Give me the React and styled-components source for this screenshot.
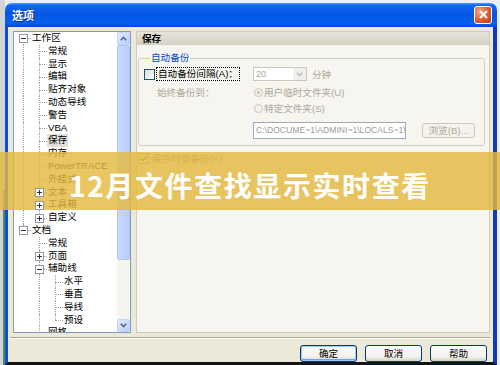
import React from 'react';
import styled, { createGlobalStyle } from 'styled-components';

const UI = `"Liberation Sans", "Noto Sans CJK SC", sans-serif`;

const GlobalStyle = createGlobalStyle`
  html, body { margin: 0; padding: 0; }
  body { width: 500px; height: 365px; overflow: hidden; font-family: ${UI}; }
`;

const Page = styled.div`
  position: relative;
  width: 500px;
  height: 365px;
  display: flex;
  background: #eceef1;
  overflow: hidden;
`;

const BackStrip = styled.div`
  width: 5px;
  flex: none;
  background:
    linear-gradient(to bottom, transparent 0 52%, #4f8a5c 52% 100%) 3px 0 / 2px 100% no-repeat,
    #d3d4d6;
`;

const Dialog = styled.div`
  flex: 1;
  min-width: 0;
  margin: 3px 3px 0 0;
  display: flex;
  flex-direction: column;
`;

const TitleBar = styled.div`
  height: 24px;
  flex: none;
  border-radius: 7px 7px 0 0;
  background: linear-gradient(180deg, #4b9cff 0%, #1065ee 10%, #0556e4 45%, #0660f0 85%, #0546d2 100%);
  display: flex;
  align-items: center;
  justify-content: space-between;
  padding: 0 5px 0 7px;
`;

const Title = styled.span`
  color: #fff;
  font: bold 11px ${UI};
  text-shadow: 1px 1px 0 #0a2a8a;
`;

const CloseButton = styled.div`
  width: 18px;
  height: 18px;
  margin-top: -1px;
  box-sizing: border-box;
  border: 1px solid #fff;
  border-radius: 3px;
  background: radial-gradient(circle at 30% 30%, #f2a58a, #dc5a30 55%, #c03c14);
  display: flex;
  align-items: center;
  justify-content: center;
`;

const Frame = styled.div`
  flex: 1;
  min-height: 0;
  display: flex;
  flex-direction: column;
  background: #ece9d8;
  border-left: 3px solid #0b4fdc;
  border-right: 4px solid #0b3bb8;
  border-bottom: 3px solid #141414;
  padding: 4px 0 0 5px;
`;

const TopArea = styled.div`
  height: 302px;
  flex: none;
  display: flex;
  gap: 5px;
  padding-right: 3px;
`;

const Tree = styled.div`
  width: 118px;
  flex: none;
  box-sizing: border-box;
  border: 1px solid #7f9db9;
  background: #fff;
  display: flex;
`;

const TreeBody = styled.div`
  flex: 1;
  min-width: 0;
  overflow: hidden;
  padding-left: 1px;
`;

const Row = styled.div`
  height: 12.8px;
  display: flex;
  font: 9.6px/12.8px ${UI};
  color: #000;
  white-space: nowrap;
`;

const Guide = styled.div`
  width: 16px;
  flex: none;
  position: relative;
  &::before {
    content: '';
    display: ${(p) => (p.$line ? 'block' : 'none')};
    position: absolute;
    left: 8px;
    top: 0;
    bottom: 0;
    border-left: 1px dotted #a4a4a4;
  }
`;

const Branch = styled.div`
  width: 16px;
  flex: none;
  position: relative;
  &::before {
    content: '';
    position: absolute;
    left: 8px;
    top: ${(p) => (p.$first ? '50%' : '0')};
    bottom: ${(p) => (p.$last ? '50%' : '0')};
    border-left: 1px dotted #a4a4a4;
  }
  &::after {
    content: '';
    position: absolute;
    left: 8px;
    right: 0;
    top: 50%;
    border-top: 1px dotted #a4a4a4;
  }
`;

const Expander = styled.svg`
  position: absolute;
  left: 4px;
  top: calc(50% - 4px);
  z-index: 1;
`;

const Label = styled.span`
  padding: 0 1px;
  background: ${(p) => (p.$sel ? '#e2e0d8' : 'transparent')};
`;

const Scrollbar = styled.div`
  width: 13px;
  flex: none;
  display: flex;
  flex-direction: column;
  background: #f5f5f0;
`;

const ScrollButton = styled.div`
  height: 13px;
  flex: none;
  box-sizing: border-box;
  border: 1px solid #c6d5fb;
  border-radius: 2px;
  background: linear-gradient(135deg, #e3ebfe, #b9cdfa);
  display: flex;
  align-items: center;
  justify-content: center;
`;

const Thumb = styled.div`
  height: 215px;
  flex: none;
  box-sizing: border-box;
  border: 1px solid #b0c5f5;
  border-radius: 2px;
  background: linear-gradient(to right, #cbd9fd, #bacdf9);
`;

const Track = styled.div`
  flex: 1;
`;

const RightPanel = styled.div`
  flex: 1;
  min-width: 0;
  display: flex;
  flex-direction: column;
  border: 1px solid #cfccbe;
  background: #f6f5f0;
`;

const PanelHeader = styled.div`
  height: 13px;
  flex: none;
  padding-left: 5px;
  font: bold 9.6px/13px ${UI};
  color: #000;
  background: linear-gradient(to bottom, #e6e3d8, #d3d0c3);
`;

const PanelBody = styled.div`
  flex: 1;
  padding: 7px 4px 0 1px;
  font: 9.6px/13px ${UI};
`;

const Group = styled.fieldset`
  margin: 0;
  padding: 0 0 6px 5px;
  border: 1px solid #d0d0bf;
  border-radius: 3px;
`;

const Legend = styled.legend`
  margin-left: 6px;
  padding: 0 1px;
  color: #0046d5;
  font: 9.6px/12px ${UI};
`;

const FormRow = styled.div`
  display: flex;
  align-items: center;
  height: ${(p) => p.$h}px;
  margin-top: ${(p) => p.$mt}px;
`;

const Col1 = styled.div`
  width: 109px;
  flex: none;
  display: flex;
  align-items: center;
  padding-left: ${(p) => p.$pl || 0}px;
  box-sizing: border-box;
`;

const Col2 = styled.div`
  flex: 1;
  display: flex;
  align-items: center;
`;

const CheckBox = styled.div`
  width: 11px;
  height: 11px;
  flex: none;
  box-sizing: border-box;
  border: 1px solid ${(p) => (p.$disabled ? '#a9a797' : '#1c5180')};
  background: ${(p) => (p.$disabled ? '#f1f0ea' : 'linear-gradient(135deg, #dcdcd7, #fff)')};
  display: flex;
  align-items: center;
  justify-content: center;
`;

const FocusLabel = styled.span`
  margin-left: 2px;
  padding: 0 1px;
  outline: 1px dotted #000;
  line-height: 12px;
  color: #000;
`;

const Muted = styled.span`
  color: ${(p) => p.$tone || '#aca899'};
  margin-left: ${(p) => p.$ml || 0}px;
`;

const Combo = styled.div`
  width: 54px;
  height: 14px;
  box-sizing: border-box;
  border: 1px solid #c9c7ba;
  background: #fff;
  display: flex;
  align-items: center;
  justify-content: space-between;
  padding-left: 2px;
  color: #aca899;
  font-size: 9px;
`;

const ComboButton = styled.div`
  width: 13px;
  height: 12px;
  background: #f0efe9;
  display: flex;
  align-items: center;
  justify-content: center;
`;

const Radio = styled.div`
  width: 9px;
  height: 9px;
  margin-left: 1px;
  box-sizing: border-box;
  border: 1px solid #c9c7ba;
  border-radius: 50%;
  background: #f3f2ec;
  display: flex;
  align-items: center;
  justify-content: center;
  &::after {
    content: '';
    display: ${(p) => (p.$on ? 'block' : 'none')};
    width: 3px;
    height: 3px;
    border-radius: 50%;
    background: #c3c0b0;
  }
`;

const PathInput = styled.div`
  width: 153px;
  height: 17px;
  box-sizing: border-box;
  border: 1px solid #9aa9bd;
  background: #fff;
  padding-left: 2px;
  overflow: hidden;
  white-space: nowrap;
  font: 8.6px/15px ${UI};
  color: #9a9a9a;
`;

const SmallButton = styled.div`
  width: 53px;
  height: 15px;
  margin-left: 16px;
  box-sizing: border-box;
  border: 1px solid #cbc8b8;
  border-radius: 3px;
  background: #f4f3ee;
  color: #aca899;
  font: 9.6px/13px ${UI};
  text-align: center;
`;

const CheckRow = styled.div`
  display: flex;
  align-items: center;
  margin-top: 7px;
  height: 11px;
  gap: 3px;
`;

const Separator = styled.div`
  height: 0;
  flex: none;
  margin: 4px 3px 0 -3px;
  border-top: 1px solid #aca899;
  border-bottom: 1px solid #fff;
`;

const ButtonRow = styled.div`
  flex: none;
  display: flex;
  justify-content: flex-end;
  gap: 8px;
  padding: 6px 6px 0 0;
`;

const Button = styled.div`
  width: 57px;
  height: 17px;
  box-sizing: border-box;
  border: 1px solid #003c74;
  border-radius: 3px;
  background: linear-gradient(#fefefe, #f2f1ec 70%, #d9d5c9);
  box-shadow: ${(p) => (p.$default ? 'inset 0 0 0 1px #a9c4f2, inset 0 -1px 0 1px #7c9ee6' : 'none')};
  font: 9.6px/15px ${UI};
  color: #000;
  text-align: center;
`;

const Banner = styled.div`
  position: absolute;
  left: 0;
  right: 0;
  top: 152px;
  height: 58px;
  box-sizing: border-box;
  padding-top: 8px;
  background: rgba(228, 185, 64, 0.82);
  display: flex;
  align-items: center;
  justify-content: center;
`;

const BannerText = styled.div`
  color: #fff;
  font: 700 28px/1 "Noto Sans CJK SC", sans-serif;
  letter-spacing: 1.6px;
`;

const treeData = [
  {
    l: '工作区',
    open: true,
    c: [
      { l: '常规' }, { l: '显示' }, { l: '编辑' }, { l: '贴齐对象' }, { l: '动态导线' },
      { l: '警告' }, { l: 'VBA' }, { l: '保存', sel: true }, { l: '内存' }, { l: 'PowerTRACE' },
      { l: '外挂式' }, { l: '文本', closed: true }, { l: '工具箱', closed: true }, { l: '自定义', closed: true },
    ],
  },
  {
    l: '文档',
    open: true,
    c: [
      { l: '常规' },
      { l: '页面', closed: true },
      { l: '辅助线', open: true, c: [{ l: '水平' }, { l: '垂直' }, { l: '导线' }, { l: '预设' }] },
      { l: '网格' },
    ],
  },
];

function flatten(nodes, level, guides, out) {
  nodes.forEach((n, i) => {
    const last = i === nodes.length - 1;
    out.push({
      label: n.l,
      level,
      guides,
      last,
      first: level === 0 && i === 0,
      exp: n.open ? '-' : n.closed ? '+' : null,
      sel: !!n.sel,
    });
    if (n.open) flatten(n.c, level + 1, [...guides, !last], out);
  });
  return out;
}

const rows = flatten(treeData, 0, [], []);

function ExpBox({ kind }) {
  return (
    <Expander width="9" height="9" viewBox="0 0 9 9">
      <rect x="0.5" y="0.5" width="8" height="8" fill="#fff" stroke="#8e9aa6" />
      <line x1="2" y1="4.5" x2="7" y2="4.5" stroke="#333" />
      {kind === '+' && <line x1="4.5" y1="2" x2="4.5" y2="7" stroke="#333" />}
    </Expander>
  );
}

function Chevron({ up, color }) {
  return (
    <svg width="7" height="5" viewBox="0 0 7 5">
      <path d={up ? 'M0.8 4.2 L3.5 1.3 L6.2 4.2' : 'M0.8 0.8 L3.5 3.7 L6.2 0.8'} fill="none" stroke={color} strokeWidth="1.5" />
    </svg>
  );
}

export default function App() {
  return (
    <>
      <GlobalStyle />
      <Page>
        <BackStrip />
        <Dialog>
          <TitleBar>
            <Title>选项</Title>
            <CloseButton>
              <svg width="9" height="9" viewBox="0 0 9 9">
                <path d="M1 1 L8 8 M8 1 L1 8" stroke="#fff" strokeWidth="1.8" />
              </svg>
            </CloseButton>
          </TitleBar>
          <Frame>
            <TopArea>
              <Tree>
                <TreeBody>
                  {rows.map((r, i) => (
                    <Row key={i}>
                      {r.guides.map((g, k) => (
                        <Guide key={k} $line={g} />
                      ))}
                      <Branch $last={r.last} $first={r.first}>
                        {r.exp && <ExpBox kind={r.exp} />}
                      </Branch>
                      <Label $sel={r.sel}>{r.label}</Label>
                    </Row>
                  ))}
                </TreeBody>
                <Scrollbar>
                  <ScrollButton>
                    <Chevron up color="#4d6185" />
                  </ScrollButton>
                  <Thumb />
                  <Track />
                  <ScrollButton>
                    <Chevron color="#4d6185" />
                  </ScrollButton>
                </Scrollbar>
              </Tree>
              <RightPanel>
                <PanelHeader>保存</PanelHeader>
                <PanelBody>
                  <Group>
                    <Legend>自动备份</Legend>
                    <FormRow $h={14} $mt={3}>
                      <Col1>
                        <CheckBox />
                        <FocusLabel>自动备份间隔(A)：</FocusLabel>
                      </Col1>
                      <Col2>
                        <Combo>
                          20
                          <ComboButton>
                            <Chevron color="#b3bdcc" />
                          </ComboButton>
                        </Combo>
                        <Muted $ml={5}>分钟</Muted>
                      </Col2>
                    </FormRow>
                    <FormRow $h={13} $mt={5}>
                      <Col1 $pl={13}>
                        <Muted>始终备份到：</Muted>
                      </Col1>
                      <Col2>
                        <Radio $on />
                        <Muted $ml={1}>用户临时文件夹(U)</Muted>
                      </Col2>
                    </FormRow>
                    <FormRow $h={13} $mt={3}>
                      <Col1 />
                      <Col2>
                        <Radio />
                        <Muted $ml={1}>特定文件夹(S)</Muted>
                      </Col2>
                    </FormRow>
                    <FormRow $h={17} $mt={7}>
                      <Col1 />
                      <Col2>
                        <PathInput>C:\DOCUME~1\ADMINI~1\LOCALS~1\Temp</PathInput>
                        <SmallButton>浏览(B)...</SmallButton>
                      </Col2>
                    </FormRow>
                  </Group>
                  <CheckRow>
                    <CheckBox $disabled>
                      <svg width="8" height="7" viewBox="0 0 8 7">
                        <path d="M1 3.5 L3 5.5 L7 1" fill="none" stroke="#5f9a3a" strokeWidth="1.5" />
                      </svg>
                    </CheckBox>
                    <Muted $tone="#8e8b7c">保存时做备份(K)</Muted>
                  </CheckRow>
                </PanelBody>
              </RightPanel>
            </TopArea>
            <Separator />
            <ButtonRow>
              <Button $default>确定</Button>
              <Button>取消</Button>
              <Button>帮助</Button>
            </ButtonRow>
          </Frame>
        </Dialog>
        <Banner>
          <BannerText>12月文件查找显示实时查看</BannerText>
        </Banner>
      </Page>
    </>
  );
}
